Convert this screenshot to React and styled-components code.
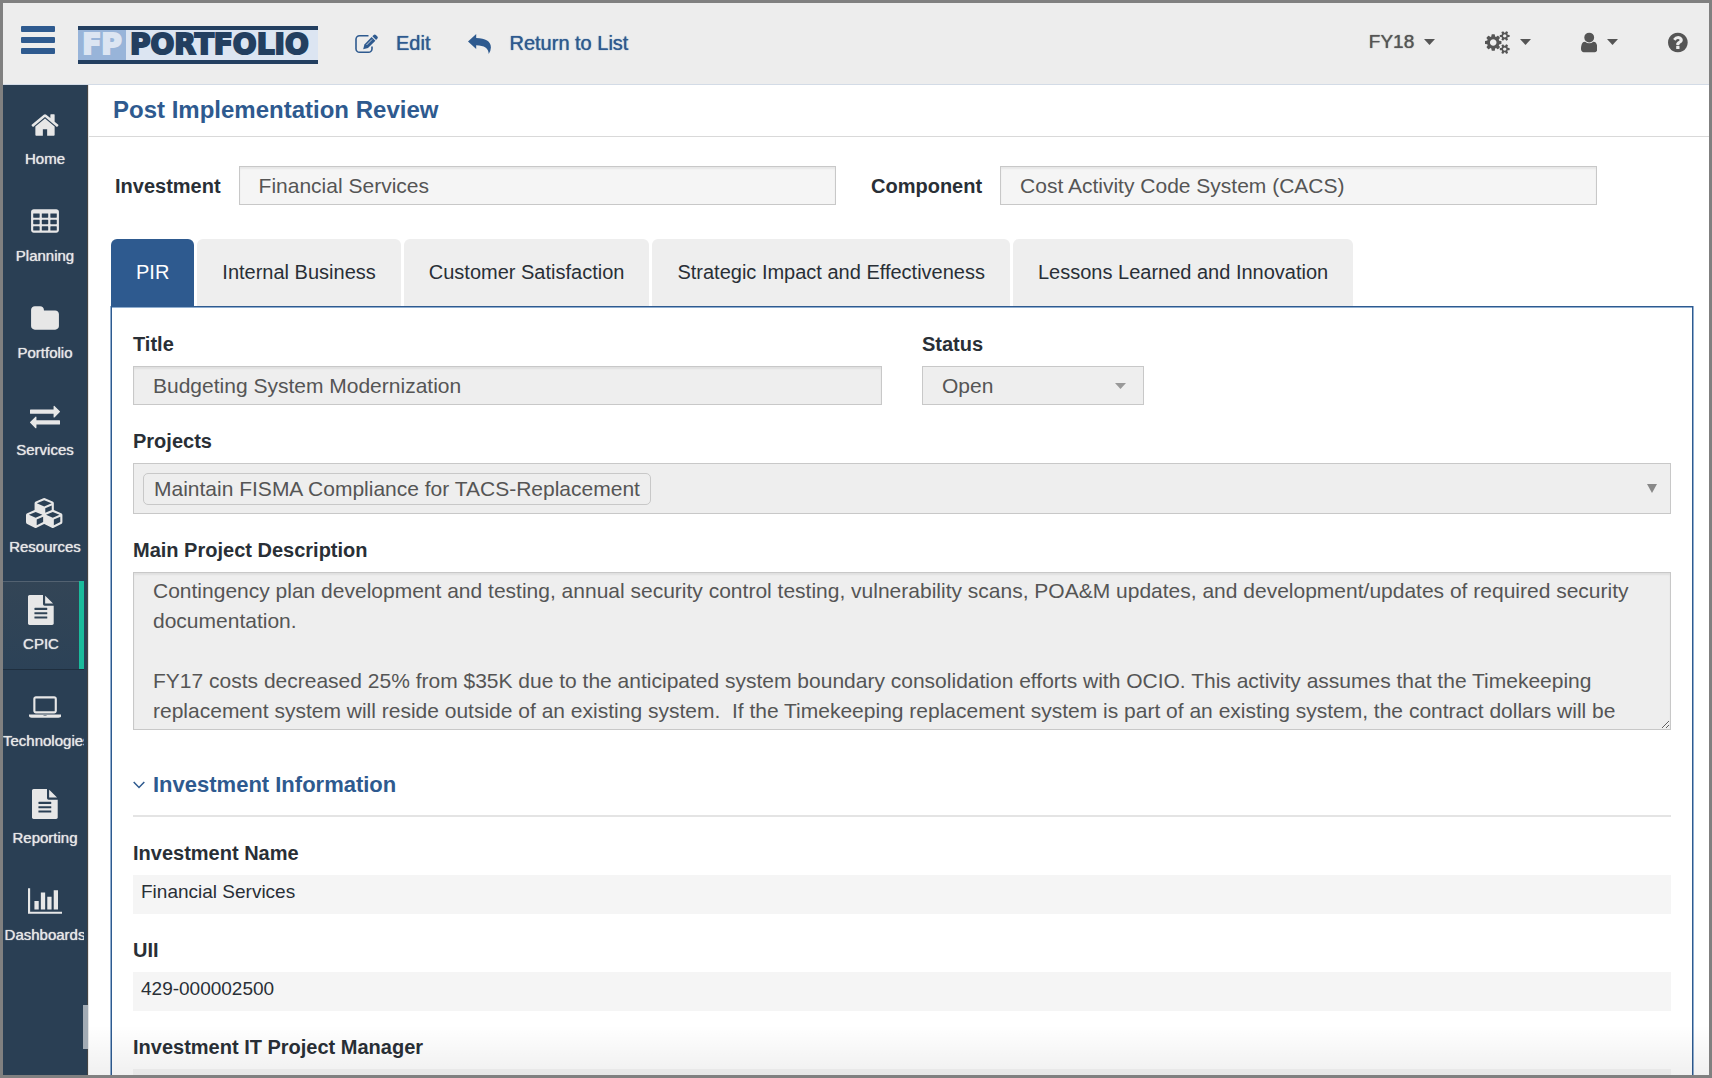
import React, { useState } from "react";
import styled, { createGlobalStyle, css } from "styled-components";

const ICONS = {
  home: {
    box: "0 0 1792 1792",
    d: "M1472 992v480q0 26-19 45t-45 19h-384v-384h-256v384h-384q-26 0-45-19t-19-45v-480q0-1 .5-3t.5-3l575-474 575 474q1 2 1 6zm223-69l-62 74q-8 9-21 11h-3q-13 0-21-7l-692-577-692 577q-12 8-24 7-13-2-21-11l-62-74q-8-10-7-23.5t11-21.5l719-599q32-26 76-26t76 26l244 204v-195q0-14 9-23t23-9h192q14 0 23 9t9 23v408l219 182q10 8 11 21.5t-7 23.5z",
  },
  table: {
    box: "0 0 1792 1792",
    d: "M576 1376v-192q0-14-9-23t-23-9h-320q-14 0-23 9t-9 23v192q0 14 9 23t23 9h320q14 0 23-9t9-23zm0-384v-192q0-14-9-23t-23-9h-320q-14 0-23 9t-9 23v192q0 14 9 23t23 9h320q14 0 23-9t9-23zm512 384v-192q0-14-9-23t-23-9h-320q-14 0-23 9t-9 23v192q0 14 9 23t23 9h320q14 0 23-9t9-23zm-512-768v-192q0-14-9-23t-23-9h-320q-14 0-23 9t-9 23v192q0 14 9 23t23 9h320q14 0 23-9t9-23zm512 384v-192q0-14-9-23t-23-9h-320q-14 0-23 9t-9 23v192q0 14 9 23t23 9h320q14 0 23-9t9-23zm512 384v-192q0-14-9-23t-23-9h-320q-14 0-23 9t-9 23v192q0 14 9 23t23 9h320q14 0 23-9t9-23zm-512-768v-192q0-14-9-23t-23-9h-320q-14 0-23 9t-9 23v192q0 14 9 23t23 9h320q14 0 23-9t9-23zm512 384v-192q0-14-9-23t-23-9h-320q-14 0-23 9t-9 23v192q0 14 9 23t23 9h320q14 0 23-9t9-23zm0-384v-192q0-14-9-23t-23-9h-320q-14 0-23 9t-9 23v192q0 14 9 23t23 9h320q14 0 23-9t9-23zm128-320v1088q0 66-47 113t-113 47h-1344q-66 0-113-47t-47-113v-1088q0-66 47-113t113-47h1344q66 0 113 47t47 113z",
  },
  folder: {
    box: "0 0 1792 1792",
    d: "M1728 608v704q0 92-66 158t-158 66h-1216q-92 0-158-66t-66-158v-960q0-92 66-158t158-66h320q92 0 158 66t66 158v32h672q92 0 158 66t66 158z",
  },
  exchange: {
    box: "0 0 1792 1792",
    d: "M1792 1184v192q0 13-9.5 22.5t-22.5 9.5h-1376v192q0 13-9.5 22.5t-22.5 9.5q-12 0-24-10l-319-320q-9-9-9-22 0-14 9-23l320-320q9-9 23-9 13 0 22.5 9.5t9.5 22.5v192h1376q13 0 22.5 9.5t9.5 22.5zm0-544q0 14-9 23l-320 320q-9 9-23 9-13 0-22.5-9.5t-9.5-22.5v-192h-1376q-13 0-22.5-9.5t-9.5-22.5v-192q0-13 9.5-22.5t22.5-9.5h1376v-192q0-14 9-23t23-9q12 0 24 10l319 319q9 9 9 23z",
  },
  cubes: {
    box: "0 0 2304 1792",
    d: "M640 1632l384-192v-314l-384 164v342zm-64-454l404-173-404-173-404 173zm1088 454l384-192v-314l-384 164v342zm-64-454l404-173-404-173-404 173zm-448-293l384-165v-266l-384 164v267zm-64-379l441-189-441-189-441 189zm1088 518v416q0 36-19 67t-52 47l-448 224q-25 14-57 14t-57-14l-448-224q-4-2-7-4-2 2-7 4l-448 224q-25 14-57 14t-57-14l-448-224q-33-16-52-47t-19-67v-416q0-38 21.5-70t56.5-48l434-186v-400q0-38 21.5-70t56.5-48l448-192q23-10 50-10t50 10l448 192q35 16 56.5 48t21.5 70v400l434 186q36 16 57 48t21 70z",
  },
  file: {
    box: "128 0 1536 1792",
    d: "M1596 476q14 14 28 36h-472v-472q22 14 36 28zm-476 164h544v1056q0 40-28 68t-68 28h-1344q-40 0-68-28t-28-68v-1600q0-40 28-68t68-28h800v544q0 40 28 68t68 28zm160 736v-64q0-14-9-23t-23-9h-704q-14 0-23 9t-9 23v64q0 14 9 23t23 9h704q14 0 23-9t9-23zm0-256v-64q0-14-9-23t-23-9h-704q-14 0-23 9t-9 23v64q0 14 9 23t23 9h704q14 0 23-9t9-23zm0-256v-64q0-14-9-23t-23-9h-704q-14 0-23 9t-9 23v64q0 14 9 23t23 9h704q14 0 23-9t9-23z",
  },
  laptop: {
    box: "0 0 1920 1792",
    d: "M416 1280q-66 0-113-47t-47-113v-704q0-66 47-113t113-47h1088q66 0 113 47t47 113v704q0 66-47 113t-113 47h-1088zm-32-864v704q0 13 9.5 22.5t22.5 9.5h1088q13 0 22.5-9.5t9.5-22.5v-704q0-13-9.5-22.5t-22.5-9.5h-1088q-13 0-22.5 9.5t-9.5 22.5zm1376 928h160v96q0 40-47 68t-113 28h-1600q-66 0-113-28t-47-68v-96h1760zm-720 96q16 0 16-16t-16-16h-160q-16 0-16 16t16 16h160z",
  },
  chart: {
    box: "0 0 2048 1792",
    d: "M640 896v512h-256v-512h256zm384-512v1024h-256v-1024h256zm1024 1152v128h-2048v-1536h128v1408h1920zm-640-896v768h-256v-768h256zm384-384v1152h-256v-1152h256z",
  },
  cogs: {
    box: "0 0 1920 1792",
    d: "M896 896q0-106-75-181t-181-75-181 75-75 181 75 181 181 75 181-75 75-181zm768 512q0-52-38-90t-90-38-90 38-38 90q0 53 37.5 90.5t90.5 37.5 90.5-37.5 37.5-90.5zm0-1024q0-52-38-90t-90-38-90 38-38 90q0 53 37.5 90.5t90.5 37.5 90.5-37.5 37.5-90.5zm-384 421v185q0 10-7 19.5t-16 10.5l-155 24q-11 35-32 76 34 48 90 115 7 11 7 20 0 12-7 19-23 30-82.5 89.5t-78.5 59.5q-11 0-21-7l-115-90q-37 19-77 31-11 108-23 155-7 24-30 24h-186q-11 0-20-7.5t-10-17.5l-23-153q-34-10-75-31l-118 89q-7 7-20 7-11 0-21-8-144-133-144-160 0-9 7-19 10-14 41-53t47-61q-23-44-35-82l-152-24q-10-1-17-9.5t-7-19.5v-185q0-10 7-19.5t16-10.5l155-24q11-35 32-76-34-48-90-115-7-11-7-20 0-12 7-20 22-30 82-89t79-59q11 0 21 7l115 90q34-18 77-32 11-108 23-154 7-24 30-24h186q11 0 20 7.5t10 17.5l23 153q34 10 75 31l118-89q8-7 20-7 11 0 21 8 144 133 144 160 0 8-7 19-12 16-42 54t-45 60q23 48 34 82l152 23q10 2 17 10.5t7 19.5zm640 533v140q0 16-149 31-12 27-30 52 51 113 51 138 0 4-4 7-122 71-124 71-8 0-46-47t-52-68q-20 2-30 2t-30-2q-14 21-52 68t-46 47q-2 0-124-71-4-3-4-7 0-25 51-138-18-25-30-52-149-15-149-31v-140q0-16 149-31 13-29 30-52-51-113-51-138 0-4 4-7 4-2 35-20t59-34 30-16q8 0 46 46.5t52 67.5q20-2 30-2t30 2q51-71 92-112l6-2q4 0 124 70 4 3 4 7 0 25-51 138 17 23 30 52 149 15 149 31zm0-1024v140q0 16-149 31-12 27-30 52 51 113 51 138 0 4-4 7-122 71-124 71-8 0-46-47t-52-68q-20 2-30 2t-30-2q-14 21-52 68t-46 47q-2 0-124-71-4-3-4-7 0-25 51-138-18-25-30-52-149-15-149-31v-140q0-16 149-31 13-29 30-52-51-113-51-138 0-4 4-7 4-2 35-20t59-34 30-16q8 0 46 46.5t52 67.5q20-2 30-2t30 2q51-71 92-112l6-2q4 0 124 70 4 3 4 7 0 25-51 138 17 23 30 52 149 15 149 31z",
  },
  user: {
    box: "256 0 1280 1792",
    d: "M1536 1399q0 109-62.5 187t-150.5 78h-854q-88 0-150.5-78t-62.5-187q0-85 8.5-160.5t31.5-152 58.5-131 94-89 134.5-34.5q131 128 313 128t313-128q76 0 134.5 34.5t94 89 58.5 131 31.5 152 8.5 160.5zm-256-887q0 159-112.5 271.5t-271.5 112.5-271.5-112.5-112.5-271.5 112.5-271.5 271.5-112.5 271.5 112.5 112.5 271.5z",
  },
  help: {
    box: "128 0 1536 1792",
    d: "M1024 1376v-192q0-14-9-23t-23-9h-192q-14 0-23 9t-9 23v192q0 14 9 23t23 9h192q14 0 23-9t9-23zm256-672q0-88-55.5-163t-138.5-116-170-41q-243 0-371 213-15 24 8 42l132 100q7 6 19 6 16 0 25-12 53-68 86-92 34-24 86-24 48 0 85.5 26t37.5 59q0 38-20 61t-68 45q-63 28-115.5 86.5t-52.5 125.5v36q0 14 9 23t23 9h192q14 0 23-9t9-23q0-19 21.5-49.5t54.5-49.5q32-18 49-28.5t46-35 44.5-48 28-60.5 12.5-81zm384 192q0 209-103 385.5t-279.5 279.5-385.5 103-385.5-103-279.5-279.5-103-385.5 103-385.5 279.5-279.5 385.5-103 385.5 103 279.5 279.5 103 385.5z",
  },
};

const NAV_ITEMS = [
  { label: "Home", icon: "home" },
  { label: "Planning", icon: "table" },
  { label: "Portfolio", icon: "folder" },
  { label: "Services", icon: "exchange" },
  { label: "Resources", icon: "cubes" },
  { label: "CPIC", icon: "file", active: true },
  { label: "Technologies", icon: "laptop" },
  { label: "Reporting", icon: "file" },
  { label: "Dashboards", icon: "chart" },
];

const TABS = [
  "PIR",
  "Internal Business",
  "Customer Satisfaction",
  "Strategic Impact and Effectiveness",
  "Lessons Learned and Innovation",
];

const DETAILS = [
  { label: "Investment Name", value: "Financial Services" },
  { label: "UII", value: "429-000002500" },
  { label: "Investment IT Project Manager", value: "" },
];

const DESCRIPTION = `Contingency plan development and testing, annual security control testing, vulnerability scans, POA&M updates, and development/updates of required security documentation.

FY17 costs decreased 25% from $35K due to the anticipated system boundary consolidation efforts with OCIO. This activity assumes that the Timekeeping replacement system will reside outside of an existing system.  If the Timekeeping replacement system is part of an existing system, the contract dollars will be`;

const Icon = ({ name, height }) => (
  <svg viewBox={ICONS[name].box} height={height} fill="currentColor" aria-hidden="true">
    <path d={ICONS[name].d} />
  </svg>
);

const EditIcon = () => (
  <svg width="23" height="20" viewBox="0 0 23 20" aria-hidden="true">
    <path
      d="M13.5 1.7H4.6A3.6 3.6 0 0 0 1 5.300V14.700A3.600 3.600 0 0 0 4.600 18.300H13.400A3.600 3.600 0 0 0 17 14.700V12.500"
      fill="none"
      stroke="currentColor"
      strokeWidth="1.6"
    />
    <path d="M8.200 15.300L9.400 10.400L16.600 3L20.400 6.700L13 14.100Z" fill="currentColor" />
    <path d="M17.400 2.300L18.700 1Q19.800 .1 20.900 1.100L22.400 2.600Q23.200 3.500 22.400 4.500L21.100 5.900Z" fill="currentColor" />
    <path d="M11.500 11L17 5.500" stroke="#ededed" strokeWidth=".8" />
  </svg>
);

const ReturnIcon = () => (
  <svg width="23" height="20" viewBox="0 0 23 20" fill="currentColor" aria-hidden="true">
    <path d="M0 7.500L8.200 0V4C17.500 4 23 7.500 22.900 13.500Q22.800 17 20.700 20Q20.500 11.600 8.200 11.300V15Z" />
  </svg>
);

const Caret = () => (
  <svg width="11" height="6" viewBox="0 0 11 6" fill="currentColor" aria-hidden="true">
    <path d="M0 0H11L5.500 6Z" />
  </svg>
);

const App = () => {
  const [activeTab, setActiveTab] = useState("PIR");

  return (
    <Frame>
      <GlobalStyle />
      <TopBar>
        <MenuButton aria-label="Toggle menu">
          <span />
          <span />
          <span />
        </MenuButton>
        <Logo href="#">
          <LogoMark>FP</LogoMark>
          <LogoName>PORTFOLIO</LogoName>
        </Logo>
        <Actions>
          <ActionLink href="#edit">
            <EditIcon />
            Edit
          </ActionLink>
          <ActionLink href="#list">
            <ReturnIcon />
            Return to List
          </ActionLink>
        </Actions>
        <Tools>
          <ToolButton>
            FY18
            <Caret />
          </ToolButton>
          <ToolButton aria-label="Settings">
            <Icon name="cogs" height={23} />
            <Caret />
          </ToolButton>
          <ToolButton aria-label="Account">
            <Icon name="user" height={23} />
            <Caret />
          </ToolButton>
          <ToolButton aria-label="Help">
            <Icon name="help" height={23} />
          </ToolButton>
        </Tools>
      </TopBar>

      <Body>
        <Sidebar>
          <NavList>
            {NAV_ITEMS.map((item) => (
              <li key={item.label}>
                <NavLink href="#" $active={item.active}>
                  <NavIcon>
                    <Icon name={item.icon} height={30} />
                  </NavIcon>
                  {item.label}
                </NavLink>
              </li>
            ))}
          </NavList>
          <ScrollThumb />
        </Sidebar>

        <Main>
          <PageHeader>
            <PageTitle>Post Implementation Review</PageTitle>
          </PageHeader>

          <Content>
            <Summary>
              <SummaryField>
                <Label htmlFor="investment">Investment</Label>
                <Input id="investment" defaultValue="Financial Services" readOnly $light />
              </SummaryField>
              <SummaryField>
                <Label htmlFor="component">Component</Label>
                <Input id="component" defaultValue="Cost Activity Code System (CACS)" readOnly $light />
              </SummaryField>
            </Summary>

            <TabList role="tablist">
              {TABS.map((tab) => (
                <Tab
                  key={tab}
                  role="tab"
                  aria-selected={tab === activeTab}
                  $active={tab === activeTab}
                  onClick={() => setActiveTab(tab)}
                >
                  {tab}
                </Tab>
              ))}
            </TabList>

            <Panel role="tabpanel">
              <FieldRow>
                <Field>
                  <Label htmlFor="title">Title</Label>
                  <Input id="title" defaultValue="Budgeting System Modernization" readOnly />
                </Field>
                <Field>
                  <Label htmlFor="status">Status</Label>
                  <SelectBox>
                    <Select id="status" defaultValue="Open">
                      <option>Open</option>
                      <option>Closed</option>
                    </Select>
                    <SelectArrow>
                      <Caret />
                    </SelectArrow>
                  </SelectBox>
                </Field>
              </FieldRow>

              <Field>
                <Label htmlFor="projects">Projects</Label>
                <MultiSelect id="projects" type="button">
                  <Chip>Maintain FISMA Compliance for TACS-Replacement</Chip>
                  <svg width="10" height="9" viewBox="0 0 10 9" fill="currentColor" aria-hidden="true">
                    <path d="M0 0H10L5 9Z" />
                  </svg>
                </MultiSelect>
              </Field>

              <Field>
                <Label htmlFor="description">Main Project Description</Label>
                <TextArea id="description" defaultValue={DESCRIPTION} readOnly />
              </Field>

              <SectionTitle>
                <svg width="12" height="8" viewBox="0 0 12 8" fill="none" aria-hidden="true">
                  <path d="M.7 1L6 6.500L11.300 1" stroke="currentColor" strokeWidth="1.5" />
                </svg>
                Investment Information
              </SectionTitle>

              {DETAILS.map((detail) => (
                <Field key={detail.label}>
                  <Label as="div">{detail.label}</Label>
                  <Value>{detail.value}</Value>
                </Field>
              ))}
            </Panel>
          </Content>
          <BottomShade />
        </Main>
      </Body>
    </Frame>
  );
};

export default App;

// ----------------------------
// Styled Components
// ----------------------------
const GlobalStyle = createGlobalStyle`
  *, *::before, *::after {
    box-sizing: border-box;
  }

  body {
    margin: 0;
    background: #fff;
    color: #292f36;
    font-family: "Liberation Sans", Arial, sans-serif;
    font-size: 19px;
  }

  button, input, select, textarea {
    font: inherit;
  }

  svg {
    display: block;
    flex: none;
  }
`;

const Frame = styled.div`
  display: flex;
  flex-direction: column;
  height: 100vh;
  border: 3px solid #808080;
  overflow: hidden;
`;

const TopBar = styled.header`
  display: flex;
  align-items: center;
  flex: none;
  height: 82px;
  padding: 0 21px 0 18px;
  background: #ededed;
  border-bottom: 1px solid #d3dbe6;
`;

const MenuButton = styled.button`
  display: flex;
  flex-direction: column;
  gap: 5px;
  width: 34px;
  padding: 0 0 8px;
  border: 0;
  background: none;

  span {
    height: 6px;
    border-radius: 1px;
    background: #2e5a8f;
  }
`;

const Logo = styled.a`
  display: flex;
  width: 240px;
  height: 38px;
  margin: 3px 0 0 23px;
  border-top: 4px solid #233f60;
  border-bottom: 4px solid #233f60;
  background: #dce5f2;
  font-family: "DejaVu Sans", Verdana, sans-serif;
  font-size: 28px;
  font-weight: bold;
  line-height: 30px;
  text-decoration: none;
`;

const LogoMark = styled.span`
  width: 48px;
  background: #98b4d9;
  color: #dce5f2;
  text-align: center;
  -webkit-text-stroke: 2px #dce5f2;
`;

const LogoName = styled.span`
  padding-left: 4px;
  color: #233f60;
  -webkit-text-stroke: 2px #233f60;
`;

const Actions = styled.nav`
  display: flex;
  gap: 38px;
  margin-left: 37px;
`;

const ActionLink = styled.a`
  display: flex;
  align-items: center;
  gap: 18px;
  color: #2e5a8f;
  font-size: 20px;
  text-decoration: none;
  text-shadow: 0 0 1px currentColor;
`;

const Tools = styled.div`
  display: flex;
  align-items: center;
  gap: 50px;
  margin-left: auto;
  padding-bottom: 3px;
`;

const ToolButton = styled.button`
  display: flex;
  align-items: center;
  gap: 10px;
  height: 30px;
  padding: 0;
  border: 0;
  background: none;
  color: #555;
  text-shadow: 0 0 1px currentColor;
`;

const Body = styled.div`
  display: flex;
  flex: 1;
  min-height: 0;
`;

const Sidebar = styled.aside`
  position: relative;
  flex: none;
  width: 85px;
  padding-right: 3px;
  border-right: 1px solid #444;
  background: #2a3f54;
`;

const NavList = styled.ul`
  display: flex;
  flex-direction: column;
  gap: 9px;
  width: 81px;
  height: 100%;
  margin: 0;
  padding: 11px 0 0;
  overflow: hidden;
  list-style: none;
`;

const NavLink = styled.a`
  display: flex;
  flex-direction: column;
  align-items: safe center;
  gap: 9px;
  width: 84px;
  height: 88px;
  padding-top: 14px;
  color: #e7e7e7;
  font-size: 15px;
  line-height: 20px;
  text-decoration: none;
  text-shadow: 0 0 1px currentColor;
  white-space: nowrap;

  ${({ $active }) =>
    $active &&
    css`
      width: 81px;
      border-right: 5px solid #1abb9c;
      background: linear-gradient(#334556, #2c4257);
      box-shadow: rgba(0, 0, 0, 0.25) 0 1px 0, inset rgba(255, 255, 255, 0.16) 0 1px 0;
    `}
`;

const NavIcon = styled.span`
  display: flex;
  align-items: center;
  height: 30px;
`;

const ScrollThumb = styled.div`
  position: absolute;
  right: -1px;
  bottom: 26px;
  width: 5px;
  height: 44px;
  background: #a2abb4;
`;

const Main = styled.main`
  position: relative;
  flex: 1;
  min-width: 0;
  overflow: hidden;
  border-left: 1px solid #e4e4e4;
`;

const PageHeader = styled.div`
  height: 52px;
  padding: 0 24px;
  border-bottom: 1px solid #d9d9d9;
`;

const PageTitle = styled.h1`
  margin: 0;
  color: #2e5a8f;
  font-size: 24px;
  line-height: 50px;
`;

const Content = styled.div`
  padding: 29px 16px 0 22px;
`;

const Summary = styled.div`
  display: grid;
  grid-template-columns: 721fr 726fr;
  gap: 35px;
  margin-bottom: 34px;
  padding: 0 96px 0 4px;
`;

const SummaryField = styled.div`
  display: flex;
  align-items: center;
  gap: 18px;
`;

const Label = styled.label`
  display: block;
  font-size: 20px;
  font-weight: bold;
  line-height: 28px;
`;

const fieldBox = css`
  width: 100%;
  border: 1px solid #c8c8c8;
  border-radius: 0;
  background: #eee;
  color: #555;
  font-size: 21px;
`;

const Input = styled.input`
  ${fieldBox}
  height: 39px;
  padding: 0 19px;
  background: ${({ $light }) => ($light ? "#f5f5f5" : "#eee")};
  box-shadow: inset 0 2px 2px rgba(0, 0, 0, 0.06);
`;

const TabList = styled.div`
  display: flex;
  gap: 3px;
`;

const Tab = styled.button`
  height: 67px;
  padding: 0 25px;
  border: 0;
  border-radius: 6px 6px 0 0;
  background: ${({ $active }) => ($active ? "#2e5a8f" : "#eee")};
  color: ${({ $active }) => ($active ? "#fff" : "#292f36")};
  font-size: 20px;
`;

const Panel = styled.section`
  padding: 23px 21px 0;
  border: 1px solid #2e5a8f;
  border-bottom: 0;
  box-shadow: -1px 0 #8fadcf, 1px 0 #8fadcf, inset 0 1px #8fadcf;
`;

const Field = styled.div`
  margin-bottom: 22px;

  > ${Label} {
    margin-bottom: 8px;
  }
`;

const FieldRow = styled.div`
  display: grid;
  grid-template-columns: 749fr 222fr 487fr;
  gap: 40px;
`;

const SelectBox = styled.div`
  position: relative;
`;

const Select = styled.select`
  ${fieldBox}
  height: 39px;
  padding: 0 19px;
  appearance: none;
`;

const SelectArrow = styled.span`
  position: absolute;
  top: 17px;
  right: 18px;
  color: #999;
  pointer-events: none;
`;

const MultiSelect = styled.button`
  ${fieldBox}
  display: flex;
  align-items: center;
  justify-content: space-between;
  height: 51px;
  padding: 0 13px 0 9px;

  svg {
    color: #888;
  }
`;

const Chip = styled.span`
  padding: 0 10px;
  border: 1px solid #c8c8c8;
  border-radius: 5px;
  line-height: 30px;
`;

const TextArea = styled.textarea`
  ${fieldBox}
  display: block;
  height: 158px;
  padding: 3px 19px;
  box-shadow: inset 0 2px 2px rgba(0, 0, 0, 0.06);
  line-height: 30px;
  overflow: hidden;
  resize: vertical;
`;

const SectionTitle = styled.h2`
  display: flex;
  align-items: center;
  gap: 8px;
  margin: 0 0 22px;
  padding: 19px 0 16px;
  border-bottom: 2px solid #e4e4e4;
  color: #2e5a8f;
  font-size: 22px;
  line-height: 28px;
`;

const Value = styled.div`
  height: 39px;
  padding: 0 8px;
  background: #f5f5f5;
  line-height: 34px;
`;

const BottomShade = styled.div`
  position: absolute;
  right: 0;
  bottom: 0;
  left: 0;
  height: 50px;
  background: linear-gradient(transparent, rgba(0, 0, 0, 0.06));
  pointer-events: none;
`;
